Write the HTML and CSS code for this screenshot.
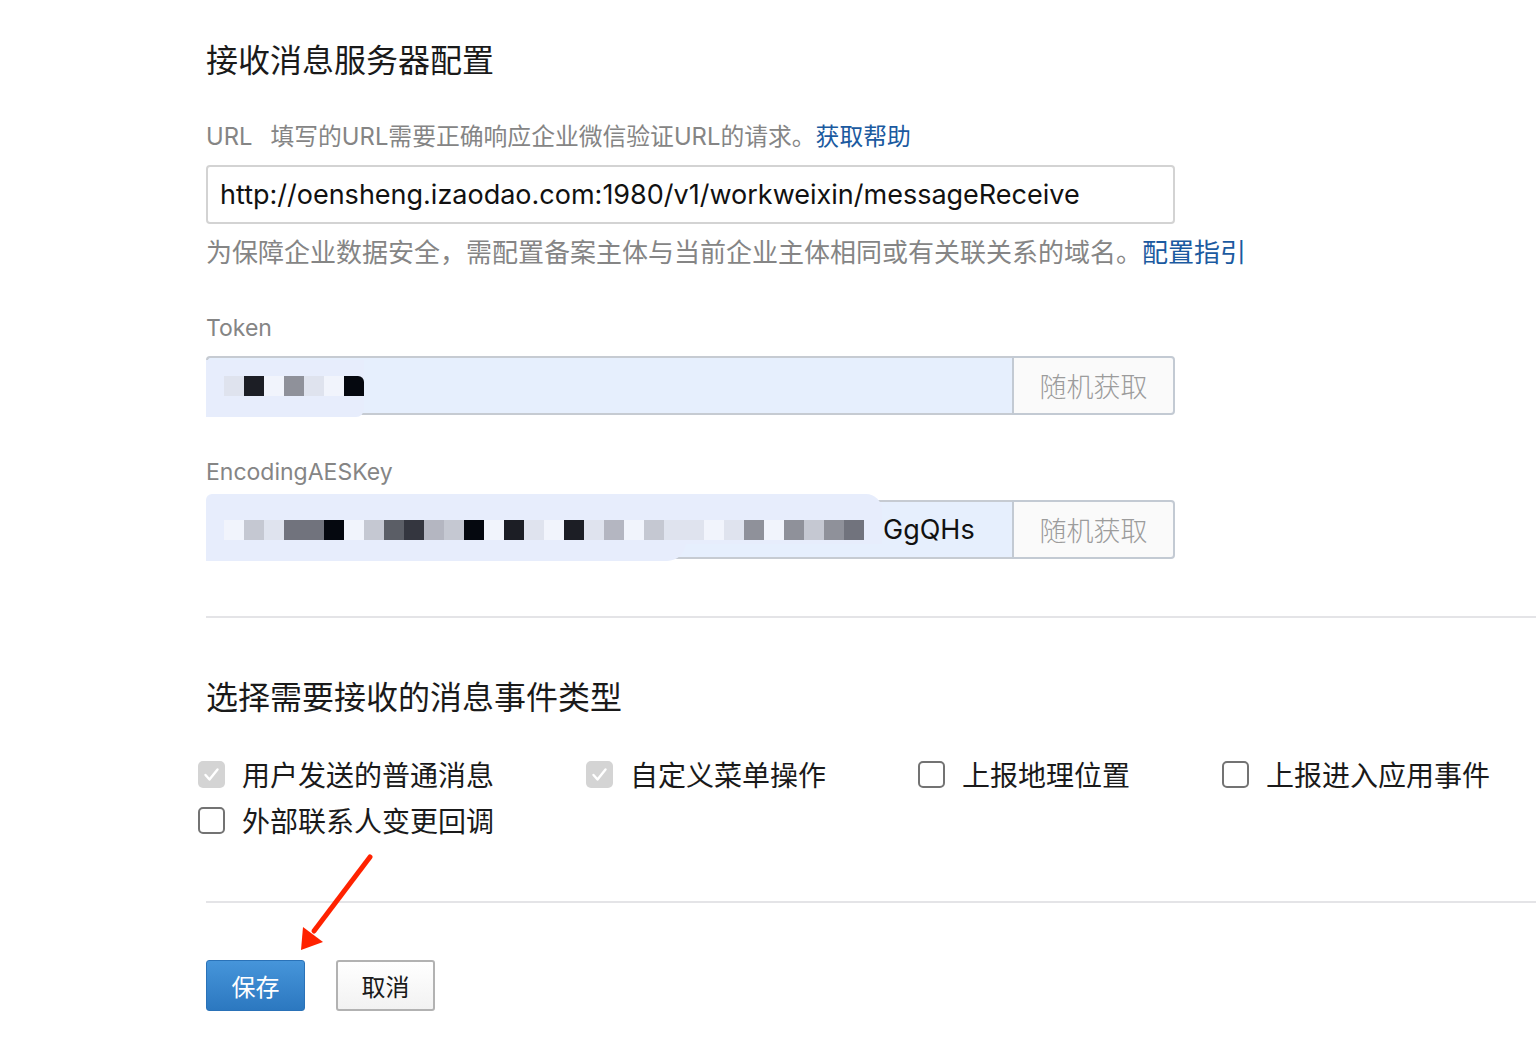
FILE: index.html
```html
<!DOCTYPE html>
<html lang="zh-CN">
<head>
<meta charset="utf-8">
<title>接收消息服务器配置</title>
<link rel="stylesheet" href="styles.css">
</head>
<body>
<div class="page">
  <section class="section">
    <h2 class="title">接收消息服务器配置</h2>

    <div class="label label-url"><span class="label-key">URL</span>填写的URL需要正确响应企业微信验证URL的请求。<a class="link" href="#">获取帮助</a></div>
    <div class="input url-input">http://oensheng.izaodao.com:1980/v1/workweixin/messageReceive</div>
    <div class="help">为保障企业数据安全，需配置备案主体与当前企业主体相同或有关联关系的域名。<a class="link" href="#">配置指引</a></div>

    <div class="label label-field">Token</div>
    <div class="input-group">
      <div class="input filled token-input">
        <div class="blob blob-token"></div>
        <div class="mosaic">
          <span class="px s1"></span><span class="px s8"></span><span class="px s0"></span><span class="px s4"></span><span class="px s1"></span><span class="px s0"></span><span class="px s9 px-end"></span>
        </div>
      </div>
      <button class="btn-random" type="button">随机获取</button>
    </div>

    <div class="label label-field">EncodingAESKey</div>
    <div class="input-group">
      <div class="input filled aes-input">
        <div class="blob blob-aes"></div>
        <div class="blob blob-aes-bottom"></div>
        <div class="mosaic">
          <span class="px s0"></span><span class="px s2"></span><span class="px s1"></span><span class="px s5"></span><span class="px s5"></span><span class="px s9"></span><span class="px s0"></span><span class="px s2"></span><span class="px s6"></span><span class="px s7"></span><span class="px s3"></span><span class="px s2"></span><span class="px s9"></span><span class="px s0"></span><span class="px s8"></span><span class="px s1"></span><span class="px s0"></span><span class="px s8"></span><span class="px s1"></span><span class="px s3"></span><span class="px s0"></span><span class="px s2"></span><span class="px s1"></span><span class="px s1"></span><span class="px s0"></span><span class="px s1"></span><span class="px s4"></span><span class="px s0"></span><span class="px s4"></span><span class="px s2"></span><span class="px s4"></span><span class="px s5"></span>
          <span class="key-tail">GgQHs</span>
        </div>
      </div>
      <button class="btn-random" type="button">随机获取</button>
    </div>
  </section>

  <hr class="divider divider-1">

  <section class="section">
    <h2 class="title">选择需要接收的消息事件类型</h2>
    <ul class="events">
      <li class="event"><span class="check checked"><svg viewBox="0 0 27 27" width="27" height="27"><path d="M7.5 14 L11.5 18.5 L19.5 8.5" fill="none" stroke="#fff" stroke-width="2.4" stroke-linecap="round" stroke-linejoin="round"/></svg></span>用户发送的普通消息</li>
      <li class="event"><span class="check checked"><svg viewBox="0 0 27 27" width="27" height="27"><path d="M7.5 14 L11.5 18.5 L19.5 8.5" fill="none" stroke="#fff" stroke-width="2.4" stroke-linecap="round" stroke-linejoin="round"/></svg></span>自定义菜单操作</li>
      <li class="event"><span class="check"></span>上报地理位置</li>
      <li class="event"><span class="check"></span>上报进入应用事件</li>
      <li class="event"><span class="check"></span>外部联系人变更回调</li>
    </ul>
  </section>

  <hr class="divider divider-2">

  <div class="actions">
    <button class="btn btn-primary" type="button">保存</button>
    <button class="btn btn-default" type="button">取消</button>
  </div>
</div>

<svg class="arrow" width="90" height="110" viewBox="0 0 90 110">
  <path d="M80 7 L24 81" stroke="#ff2200" stroke-width="5" stroke-linecap="round" fill="none"/>
  <path d="M13 77 L33 92 L11 100 Z" fill="#ff2200"/>
</svg>
</body>
</html>
```

FILE: styles.css
```css
html, body {
  margin: 0;
  padding: 0;
  background: #ffffff;
}

body {
  font-family: "Inter", "Noto Sans CJK SC", sans-serif;
  color: #1f1f1f;
  position: relative;
  min-height: 1062px;
}

.page {
  padding: 39px 0 0 206px;
}

.section {
  display: flex;
  flex-direction: column;
  align-items: flex-start;
}

.title {
  margin: 0;
  font-size: 32px;
  line-height: 44px;
  font-weight: 400;
  color: #1a1a1a;
  letter-spacing: 0;
}

.label {
  color: #858585;
  font-size: 23.8px;
  line-height: 34px;
}

.label-url {
  margin-top: 37px;
}

.label-key {
  margin-right: 18px;
}

.label-field {
  margin-top: 42px;
  font-size: 23px;
  line-height: 30px;
}

.link {
  color: #1b5aa0;
  text-decoration: none;
}

.input {
  box-sizing: border-box;
  width: 969px;
  height: 59px;
  border: 2px solid #d3d3d3;
  border-radius: 4px;
  padding: 0 12px;
  display: flex;
  align-items: center;
  font-size: 27px;
  color: #111;
  background: #fff;
}

.url-input {
  margin-top: 11px;
}

.help {
  margin-top: 11px;
  font-size: 26px;
  line-height: 36px;
  color: #858585;
}

.input-group {
  margin-top: 13px;
  width: 969px;
  height: 59px;
  display: flex;
  box-sizing: border-box;
}

.input-group .input {
  flex: 1;
  width: auto;
  border-right: none;
  border-radius: 4px 0 0 4px;
  border-color: #c6cbd2;
  position: relative;
  padding-left: 16px;
}

.filled {
  background: #e6effd;
}

.btn-random {
  box-sizing: border-box;
  width: 163px;
  height: 59px;
  border: 2px solid #c3cad3;
  border-radius: 0 4px 4px 0;
  background: #fafafa;
  color: #9c9c9c;
  font-family: "Noto Sans CJK SC", sans-serif;
  font-size: 27px;
  padding: 0;
  font-weight: 300;
}

.blob {
  position: absolute;
  background: #e7edfc;
}

.blob-token {
  left: -2px;
  top: 2px;
  width: 158px;
  height: 57px;
  border-radius: 0 0 8px 0;
}

.blob-aes {
  left: -2px;
  top: -8px;
  width: 676px;
  height: 50px;
  border-radius: 6px 16px 0 0;
}

.blob-aes-bottom {
  left: -2px;
  top: 40px;
  width: 480px;
  height: 19px;
  border-radius: 0 0 30px 0;
}

.mosaic {
  position: relative;
  display: flex;
  align-items: center;
  height: 20px;
}

.px {
  display: block;
  width: 20px;
  height: 20px;
}

.px-end {
  border-radius: 0 6px 0 0;
}

.s0 { background: #f1f4fc; }
.s1 { background: #dfe3ee; }
.s2 { background: #c5c8d2; }
.s3 { background: #b4b6c1; }
.s4 { background: #8f919a; }
.s5 { background: #71737d; }
.s6 { background: #5b5e66; }
.s7 { background: #34363f; }
.s8 { background: #1c1e25; }
.s9 { background: #05080f; }

.key-tail {
  margin-left: 19px;
  font-size: 27px;
  color: #111;
  line-height: 20px;
}

.divider {
  border: none;
  height: 2px;
  background: #e4e4e7;
  margin: 0;
}

.divider-1 {
  margin-top: 57px;
  margin-bottom: 58px;
}

.divider-2 {
  margin-top: 58px;
}

.events {
  list-style: none;
  margin: 31px 0 0 -8px;
  padding: 0;
  display: flex;
  flex-wrap: wrap;
  column-gap: 92px;
  width: 1330px;
}

.event {
  display: flex;
  align-items: center;
  height: 46px;
  font-size: 28px;
  color: #1a1a1a;
}

.check {
  box-sizing: border-box;
  width: 27px;
  height: 27px;
  border: 2px solid #737373;
  border-radius: 5px;
  margin-right: 17px;
  display: block;
  background: #fff;
}

.check.checked {
  border: none;
  background: #d4d4d4;
}

.check svg {
  display: block;
}

.actions {
  margin-top: 57px;
  display: flex;
  gap: 31px;
}

.btn {
  box-sizing: border-box;
  width: 99px;
  height: 51px;
  border-radius: 3px;
  font-family: "Noto Sans CJK SC", sans-serif;
  font-size: 24px;
  padding: 0;
}

.btn-primary {
  background: linear-gradient(#4695da, #2c78c0);
  border: 1px solid #2a72b8;
  color: #fff;
}

.btn-default {
  background: linear-gradient(#ffffff, #f2f2f2);
  border: 2px solid #b2b2b2;
  color: #1a1a1a;
}

.arrow {
  position: absolute;
  left: 290px;
  top: 850px;
}
```
